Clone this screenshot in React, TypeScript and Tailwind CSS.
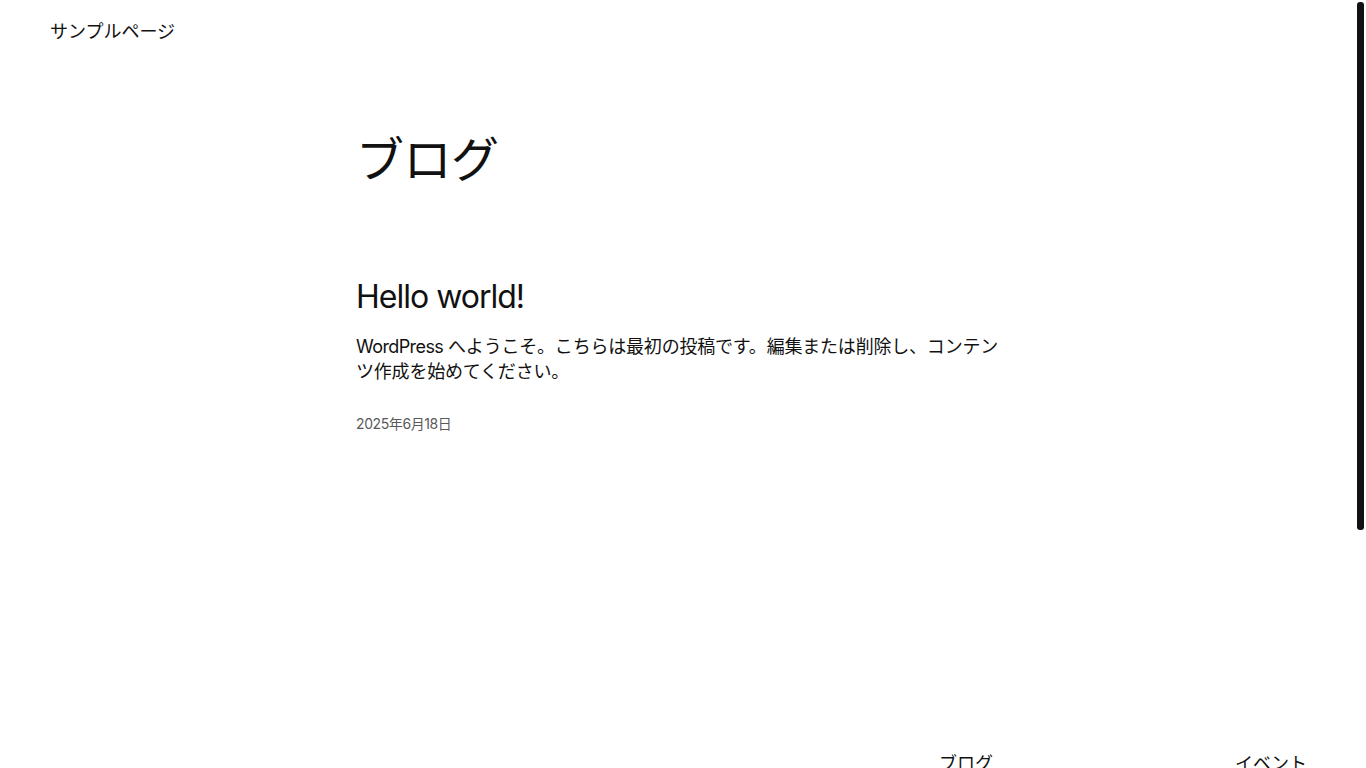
import React from "react";

export default function App() {
  return (
    <div className="flex h-screen overflow-hidden bg-white text-[#111111] font-['Inter','Noto_Sans_CJK_JP',sans-serif]">
      <div className="flex flex-1 flex-col">
        <header className="px-[50px] pt-[18px] text-[18px] leading-[27px]">
          サンプルページ
        </header>
        <main className="mx-auto w-[645px]">
          <h1 className="mt-[86px] text-[48px] leading-[58px] font-normal tracking-[-0.5px]">ブログ</h1>
          <h2 className="mt-[89px] text-[32px] leading-[38px] font-normal tracking-[-1px]">Hello world!</h2>
          <p className="mt-[18px] text-[18px] leading-[25px] tracking-[-0.2px]">
            <span className="tracking-[-0.6px]">WordPress</span> へようこそ。こちらは最初の投稿です。編集または削除し、コンテンツ作成を始めてください。
          </p>
          <div className="mt-[29px] text-[14px] leading-[21px] text-[#5a5a5a] tracking-[-0.4px]">2025年6月18日</div>
        </main>
        <footer className="mt-[316px] flex justify-end px-[50px] text-[18px] leading-[27px]">
          <div className="w-[296px]">ブログ</div>
          <div>イベント</div>
        </footer>
      </div>
      <div className="w-[9px] pt-[2px]">
        <div className="h-[528px] w-[7px] rounded-[3px] bg-[#111111]" />
      </div>
    </div>
  );
}
